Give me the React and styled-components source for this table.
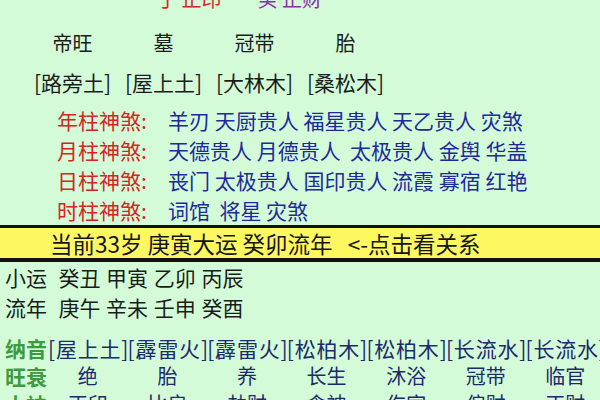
import React from "react";
import styled, { createGlobalStyle } from "styled-components";

const GlobalStyle = createGlobalStyle`
  html, body {
    margin: 0;
    padding: 0;
    background: #d4fbd8;
  }
  body {
    font-family: "Noto Sans CJK SC", "Noto Sans", sans-serif;
    color: #1b1b1b;
  }
`;

const Page = styled.div`
  width: 600px;
  height: 400px;
  overflow: hidden;
  background: #d4fbd8;
  display: flex;
  flex-direction: column;
  white-space: nowrap;
`;

const TopRow = styled.div`
  margin-top: -16px;
  height: 30px;
  line-height: 30px;
  font-size: 20px;
  padding-left: 157px;
  display: flex;
  gap: 36px;
`;

const Tone = styled.span`
  color: ${p => p.color};
`;

const FourGrid = styled.div`
  display: grid;
  grid-template-columns: repeat(4, 91px);
  padding-left: 27px;
  height: 30px;
  line-height: 30px;
  font-size: ${p => p.size || 20}px;
  margin-top: ${p => p.top}px;
  text-align: center;
`;

const ShenshaList = styled.div`
  margin-top: 8px;
  padding-left: 57px;
  font-size: 21px;
`;

const ShenshaRow = styled.div`
  height: 30px;
  line-height: 30px;
  display: flex;
`;

const ShenshaLabel = styled.span`
  color: #d42424;
  width: 111px;
`;

const ShenshaValues = styled.span`
  color: #1d2a9c;
  white-space: pre;
`;

const Banner = styled.div`
  border-top: 3px solid #111;
  border-bottom: 4px solid #111;
  background: #fdf862;
  height: 30px;
  line-height: 30px;
  font-size: 22.5px;
  padding-left: 50px;
  color: #151515;
  white-space: pre;
  cursor: pointer;
`;

const PlainRow = styled.div`
  height: 30px;
  line-height: 30px;
  font-size: 21px;
  padding-left: 5px;
  white-space: pre;
  word-spacing: 1px;
`;

const ChartRows = styled.div`
  margin-top: 12px;
  display: flex;
  flex-direction: column;
`;

const ChartRow = styled.div`
  display: grid;
  grid-template-columns: 43px repeat(7, 79.6px);
  height: 28px;
  line-height: 28px;
  font-size: 20px;
  padding-left: 5px;
`;

const ChartLabel = styled.span`
  color: #3d9b3f;
  font-weight: 700;
  font-size: 21px;
  text-align: left;
`;

const Cell = styled.span`
  text-align: center;
  color: #1d2a6a;
  font-size: ${p => (p.wide ? "21px" : "20px")};
  letter-spacing: ${p => (p.wide ? "0.8px" : "0")};
`;

const stages = ["帝旺", "墓", "冠带", "胎"];
const nayin4 = ["[路旁土]", "[屋上土]", "[大林木]", "[桑松木]"];

const shensha = [
  { label: "年柱神煞:", value: "羊刃 天厨贵人 福星贵人 天乙贵人 灾煞" },
  { label: "月柱神煞:", value: "天德贵人 月德贵人  太极贵人 金舆 华盖" },
  { label: "日柱神煞:", value: "丧门 太极贵人 国印贵人 流霞 寡宿 红艳" },
  { label: "时柱神煞:", value: "词馆  将星 灾煞" }
];

const chart = [
  {
    label: "纳音",
    wide: true,
    cells: ["[屋上土]", "[霹雷火]", "[霹雷火]", "[松柏木]", "[松柏木]", "[长流水]", "[长流水]"]
  },
  {
    label: "旺衰",
    cells: ["绝", "胎", "养", "长生", "沐浴", "冠带", "临官"]
  },
  {
    label: "十神",
    cells: ["正印", "比肩", "劫财", "食神", "伤官", "偏财", "正财"]
  }
];

export default function App() {
  return (
    <>
      <GlobalStyle />
      <Page>
        <TopRow>
          <Tone color="#d42a24">丁 正印</Tone>
          <Tone color="#8a2fae">癸 正财</Tone>
        </TopRow>

        <FourGrid top={14}>
          {stages.map(s => (
            <span key={s}>{s}</span>
          ))}
        </FourGrid>
        <FourGrid top={9} size={21}>
          {nayin4.map(s => (
            <span key={s}>{s}</span>
          ))}
        </FourGrid>

        <ShenshaList>
          {shensha.map(row => (
            <ShenshaRow key={row.label}>
              <ShenshaLabel>{row.label}</ShenshaLabel>
              <ShenshaValues>{row.value}</ShenshaValues>
            </ShenshaRow>
          ))}
        </ShenshaList>

        <Banner>{"当前33岁 庚寅大运 癸卯流年   <-点击看关系"}</Banner>

        <PlainRow>{"小运  癸丑 甲寅 乙卯 丙辰"}</PlainRow>
        <PlainRow>{"流年  庚午 辛未 壬申 癸酉"}</PlainRow>

        <ChartRows>
          {chart.map(row => (
            <ChartRow key={row.label}>
              <ChartLabel>{row.label}</ChartLabel>
              {row.cells.map((c, i) => (
                <Cell key={i} wide={row.wide}>
                  {c}
                </Cell>
              ))}
            </ChartRow>
          ))}
        </ChartRows>
      </Page>
    </>
  );
}
